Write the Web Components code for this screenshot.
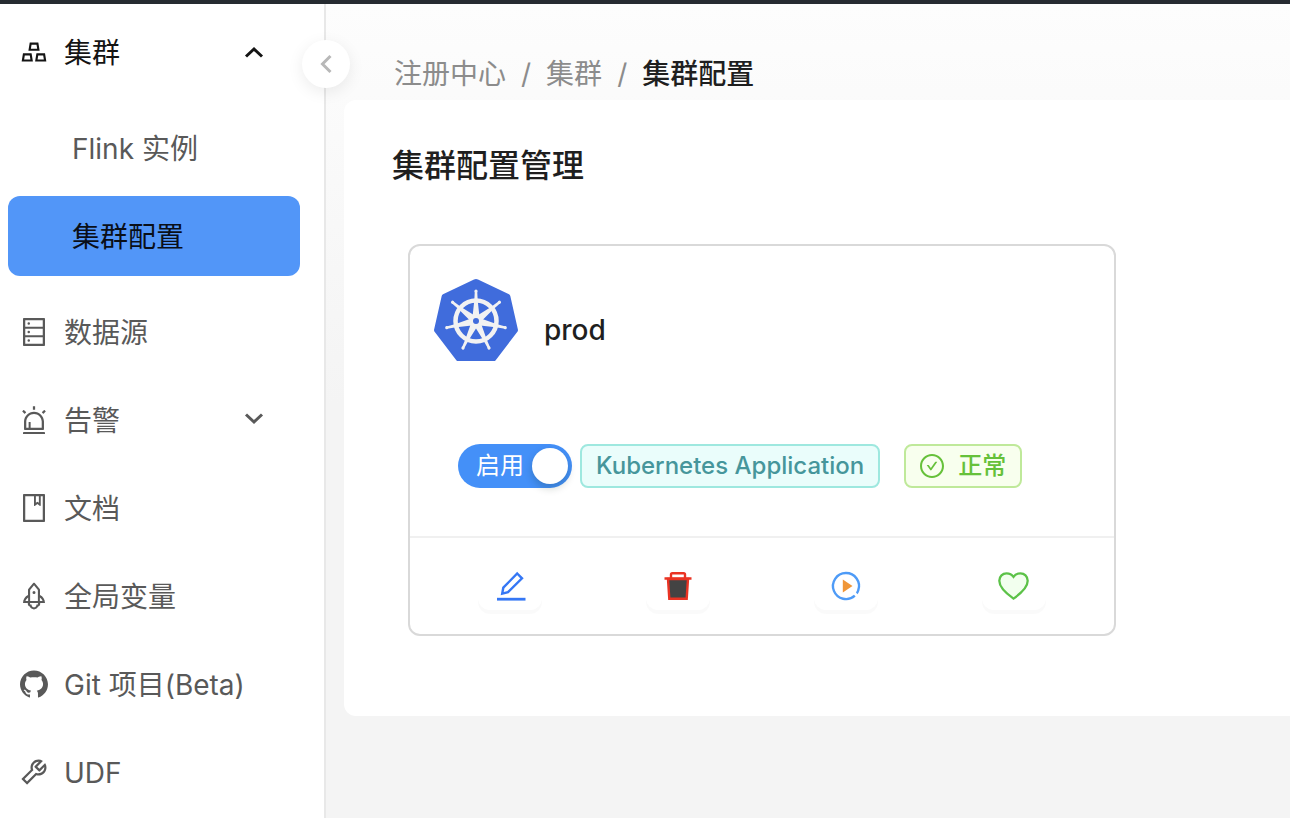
<!DOCTYPE html>
<html lang="zh-CN">
<head>
<meta charset="utf-8">
<meta name="viewport" content="width=device-width, initial-scale=1">
<title>集群配置</title>
<style>
  html, body { margin: 0; height: 100%; }
  body { font-family: Inter, "Noto Sans CJK SC", sans-serif; font-size: 28px; line-height: 44px; color: #1f1f1f; }
</style>
</head>
<body>
<app-shell>
  <side-menu slot="side">
    <menu-item icon="gold" arrow="up" current>集群</menu-item>
    <sub-menu>
      <menu-item nested>Flink 实例</menu-item>
      <menu-item nested selected>集群配置</menu-item>
    </sub-menu>
    <menu-item icon="database">数据源</menu-item>
    <menu-item icon="alert" arrow="down">告警</menu-item>
    <menu-item icon="book">文档</menu-item>
    <menu-item icon="rocket">全局变量</menu-item>
    <menu-item icon="github">Git 项目(Beta)</menu-item>
    <menu-item icon="tool">UDF</menu-item>
  </side-menu>
  <bread-crumbs>
    <a href="#registration">注册中心</a>
    <a href="#cluster">集群</a>
    <span aria-current="page">集群配置</span>
  </bread-crumbs>
  <page-panel heading="集群配置管理">
    <cluster-card name="prod">
      <toggle-switch slot="tags">启用</toggle-switch>
      <status-tag slot="tags" kind="cyan">Kubernetes Application</status-tag>
      <status-tag slot="tags" kind="green" icon="check">正常</status-tag>
      <icon-button slot="actions" icon="edit" label="编辑"></icon-button>
      <icon-button slot="actions" icon="trash" label="删除"></icon-button>
      <icon-button slot="actions" icon="play" label="启动"></icon-button>
      <icon-button slot="actions" icon="heart" label="心跳"></icon-button>
    </cluster-card>
  </page-panel>
</app-shell>

<script>
const ant = d => `<svg viewBox="64 64 896 896" fill="currentColor"><path d="${d}"/></svg>`;
const ICONS = {
  gold: ant('M342 472h342c.4 0 .9 0 1.3-.1 4.4-.7 7.3-4.8 6.6-9.2l-40.2-248c-.6-3.9-4-6.7-7.9-6.7H382.2c-3.9 0-7.3 2.8-7.9 6.7l-40.2 248c-.1.4-.1.9-.1 1.3 0 4.4 3.6 8 8 8zm91.2-196h159.5l20.7 128h-201l20.8-128zm2.5 282.7c-.6-3.9-4-6.7-7.9-6.7H166.2c-3.9 0-7.3 2.8-7.9 6.7l-40.2 248c-.1.4-.1.9-.1 1.3 0 4.4 3.6 8 8 8h342c.4 0 .9 0 1.3-.1 4.4-.7 7.3-4.8 6.6-9.2l-40.2-248zM196.5 748l20.7-128h159.5l20.7 128H196.5zm709.4 58.7l-40.2-248c-.6-3.9-4-6.7-7.9-6.7H596.2c-3.9 0-7.3 2.8-7.9 6.7l-40.2 248c-.1.4-.1.9-.1 1.3 0 4.4 3.6 8 8 8h342c.4 0 .9 0 1.3-.1 4.3-.7 7.3-4.8 6.6-9.2zM626.5 748l20.7-128h159.5l20.7 128H626.5z'),
  database: ant('M832 64H192c-17.7 0-32 14.3-32 32v832c0 17.7 14.3 32 32 32h640c17.7 0 32-14.3 32-32V96c0-17.7-14.3-32-32-32zm-600 72h560v208H232V136zm560 480H232V408h560v208zm0 272H232V680h560v208zM304 240a40 40 0 1080 0 40 40 0 10-80 0zm0 272a40 40 0 1080 0 40 40 0 10-80 0zm0 272a40 40 0 1080 0 40 40 0 10-80 0z'),
  alert: ant('M193 796c0 17.7 14.3 32 32 32h574c17.7 0 32-14.3 32-32V563c0-176.2-142.8-319-319-319S193 386.8 193 563v233zm72-233c0-136.4 110.6-247 247-247s247 110.6 247 247v193H404V585c0-5.5-4.5-10-10-10h-44c-5.5 0-10 4.5-10 10v171h-75V563zm-48.1-252.5l39.6-39.6c3.1-3.1 3.1-8.2 0-11.3l-67.9-67.9a8.03 8.03 0 00-11.3 0l-39.6 39.6a8.03 8.03 0 000 11.3l67.9 67.9c3.1 3.1 8.1 3.1 11.3 0zm669.6-79.2l-39.6-39.6a8.03 8.03 0 00-11.3 0l-67.9 67.9a8.03 8.03 0 000 11.3l39.6 39.6c3.1 3.1 8.2 3.1 11.3 0l67.9-67.9c3.1-3.2 3.1-8.2 0-11.3zM832 892H192c-17.7 0-32 14.3-32 32v24c0 4.4 3.6 8 8 8h688c4.4 0 8-3.6 8-8v-24c0-17.7-14.3-32-32-32zM484 180h56c4.4 0 8-3.6 8-8V76c0-4.4-3.6-8-8-8h-56c-4.4 0-8 3.6-8 8v96c0 4.4 3.6 8 8 8z'),
  book: ant('M832 64H192c-17.7 0-32 14.3-32 32v832c0 17.7 14.3 32 32 32h640c17.7 0 32-14.3 32-32V96c0-17.7-14.3-32-32-32zm-260 72h96v209.9L621.5 312 572 347.4V136zm220 752H232V136h280v296.9c0 3.3 1 6.6 3 9.3a15.9 15.9 0 0022.3 3.7l83.8-59.9 81.4 59.4c2.7 2 6 3.1 9.4 3.1 8.8 0 16-7.2 16-16V136h64v752z'),
  rocket: ant('M864 736c0-111.6-65.4-208-160-252.9V317.3c0-15.1-5.3-29.7-15.1-41.2L536.5 95.4C530.1 87.8 521 84 512 84s-18.1 3.8-24.5 11.4L335.1 276.1a63.97 63.97 0 00-15.1 41.2v165.8C225.4 528 160 624.4 160 736h156.5c-2.3 7.2-3.5 15-3.5 23.8 0 22.1 7.6 43.7 21.4 60.8a97.2 97.2 0 0043.1 30.6c23.1 54 75.6 88.8 134.5 88.8 29.1 0 57.3-8.6 81.4-24.8 23.6-15.8 41.9-37.9 53-64a97 97 0 0043.1-30.5 97.52 97.52 0 0021.4-60.8c0-8.4-1.1-16.4-3.1-23.8H864zM762.3 621.4c9.4 14.6 17 30.3 22.5 46.6H700V558.7a211.6 211.6 0 0162.3 62.7zM388 483.1V318.8l124-147 124 147V668H388V483.1zM239.1 668c5.5-16.3 13.1-32 22.5-46.6 16.3-25.2 37.5-46.5 62.3-62.7V668h-84.8zm388.9 116.2c-5.2 3-11.2 4.2-17.1 3.4l-19.5-2.4-2.8 19.4c-5.4 37.9-38.4 66.5-76.7 66.5-38.3 0-71.3-28.6-76.7-66.5l-2.8-19.5-19.5 2.5a27.7 27.7 0 01-17.1-3.5c-8.7-5-14.1-14.3-14.1-24.4 0-10.6 5.9-19.4 14.6-23.8h231.3c8.8 4.5 14.6 13.3 14.6 23.8-.1 10.2-5.5 19.6-14.2 24.5zM464 400a48 48 0 1096 0 48 48 0 10-96 0z'),
  github: ant('M511.6 76.3C264.3 76.2 64 276.4 64 523.5 64 718.9 189.3 885 363.8 946c23.5 5.9 19.9-10.8 19.9-22.2v-77.5c-135.7 15.9-141.2-73.9-150.3-88.9C215 726 171.5 718 184.5 703c30.9-15.9 62.4 4 98.9 57.9 26.4 39.1 77.9 32.5 104 26 5.7-23.5 17.9-44.5 34.7-60.8-140.6-25.2-199.2-111-199.2-213 0-49.5 16.3-95 48.3-131.7-20.4-60.5 1.9-112.3 4.9-120 58.1-5.2 118.5 41.6 123.2 45.3 33-8.9 70.7-13.6 112.9-13.6 42.4 0 80.2 4.9 113.5 13.9 11.3-8.6 67.3-48.8 121.3-43.9 2.9 7.7 24.7 58.3 5.5 118 32.4 36.8 48.9 82.7 48.9 132.3 0 102.2-59 188.1-200 212.9a127.5 127.5 0 0138.1 91v112.5c.8 9 0 17.9 15 17.9 177.1-59.7 304.6-227 304.6-424.1 0-247.2-200.4-447.3-447.5-447.3z'),
  tool: ant('M876.6 239.5c-.5-.9-1.2-1.8-2-2.5-5-5-13.1-5-18.1 0L684.2 409.3l-67.9-67.9L788.7 169c.8-.8 1.4-1.6 2-2.5 3.6-6.1 1.6-13.9-4.5-17.5-98.2-58-226.8-44.7-311.3 39.7-67 67-89.2 162-66.5 247.4l-293 293c-3 3-2.8 7.9.3 11l169.7 169.7c3.1 3.1 8.1 3.3 11 .3l292.9-292.9c85.5 22.8 180.5.7 247.6-66.4 84.4-84.5 97.7-213.1 39.7-311.3zM786 499.8c-58.1 58.1-145.3 69.3-214.6 33.6l-8.8 8.8-.1-.1-274 274.1-79.2-79.2 230.1-230.1s0 .1.1.1l52.8-52.8c-35.7-69.3-24.5-156.5 33.6-214.6a184.2 184.2 0 01144-53.5L537 318.9a32.05 32.05 0 000 45.3l124.5 124.5a32.05 32.05 0 0045.3 0l132.8-132.8c3.7 51.8-14.4 104.8-53.6 143.9z'),
  check: ant('M699 353h-46.9c-10.2 0-19.9 4.9-25.9 13.3L469 584.3l-71.2-98.8c-6-8.3-15.6-13.3-25.9-13.3H325c-6.5 0-10.3 7.4-6.5 12.7l124.6 172.8a31.8 31.8 0 0051.7 0l210.6-292c3.9-5.3.1-12.7-6.4-12.7zM512 64C264.6 64 64 264.6 64 512s200.6 448 448 448 448-200.6 448-448S759.4 64 512 64zm0 820c-205.4 0-372-166.6-372-372s166.6-372 372-372 372 166.6 372 372-166.6 372-372 372z'),
  up: '<svg viewBox="0 0 20 20" fill="none" stroke="currentColor" stroke-width="3"><path d="M2 14.500 10 7l8 7.500"/></svg>',
  down: '<svg viewBox="0 0 20 20" fill="none" stroke="currentColor" stroke-width="3"><path d="M2 4.500 10 12l8-7.500"/></svg>',
  left: '<svg viewBox="0 0 20 20" fill="none" stroke="currentColor" stroke-width="3"><path d="M14.500 2 6.500 10l8 8"/></svg>',
  edit: '<svg viewBox="0 0 32 32" fill="none" stroke="#3577f5"><path stroke-width="2.400" d="M23.200 3.500 28 8.300 14 22.200l-5.800 1.500 1.100-6z"/><path stroke-width="2.800" d="M3 29.200h28.500"/></svg>',
  trash: '<svg viewBox="0 0 32 32" fill="none"><path fill="#434343" stroke="#ea3323" stroke-width="2.400" d="M6 9h20l-1.300 19.700H7.300z"/><path stroke="#ea3323" stroke-width="2.400" stroke-linejoin="round" d="M2.500 8.500h27M9 8V4.500a1.300 1.300 0 0 1 1.300-1.300h11.400a1.300 1.300 0 0 1 1.300 1.300V8"/></svg>',
  play: '<svg viewBox="0 0 32 32"><path fill="none" stroke="#4e9bf7" stroke-width="2.400" d="M24.800 25.600A13 13 0 1 1 28.200 20.500Q27.600 22.500 26.600 23.300"/><path fill="#f09637" d="M12.800 9.400v13.200L22.500 16z"/></svg>',
  heart: '<svg viewBox="0 0 32 32"><path fill="#f2ffee" stroke="#5cc248" stroke-width="2.300" d="M15.500 28.600C7.500 23 1.300 17.600 1.300 10.800 1.300 6.200 4.700 3.300 8.500 3.300c3 0 5.500 1.300 7 3.500 1.500-2.200 4-3.500 7-3.500 3.800 0 7.200 2.900 7.200 7.500C29.700 17.600 23.500 23 15.500 28.600z"/></svg>'
};

class Base extends HTMLElement {
  connectedCallback() {
    if (this.shadowRoot) return;
    this.attachShadow({ mode: 'open' }).innerHTML = this.render();
  }
}

customElements.define('ui-icon', class extends Base {
  render() {
    return `<style>:host{display:block;flex:none;width:28px;height:28px}svg{display:block;width:100%;height:100%}</style>${ICONS[this.getAttribute('name')] || ''}`;
  }
});

customElements.define('app-shell', class extends Base {
  render() {
    return `<style>
      :host{display:flex;flex-direction:column;min-height:100%}
      .top{height:4px;background:#262b31}
      .body{display:flex;flex:1}
      aside{position:relative;box-sizing:border-box;flex:none;width:326px;background:#fff;border-right:2px solid #e8e8e8}
      main{flex:1;min-width:0;padding-left:18px;background:linear-gradient(#fdfdfd,#f4f4f4 400px)}
      .fold{position:absolute;top:36px;right:-26px;z-index:1;display:grid;place-items:center;width:48px;height:48px;padding:0;border:0;border-radius:50%;background:#fff;color:#b8b8b8;box-shadow:0 4px 16px rgba(0,0,0,.08)}
      .fold ui-icon{width:20px;height:20px}
    </style>
    <div class="top"></div>
    <div class="body">
      <aside><slot name="side"></slot><button class="fold" aria-label="收起菜单"><ui-icon name="left"></ui-icon></button></aside>
      <main><slot></slot></main>
    </div>`;
  }
});

customElements.define('side-menu', class extends Base {
  render() {
    return `<style>:host{display:block}nav{display:flex;flex-direction:column;gap:8px;padding:8px 24px 0 8px}</style><nav><slot></slot></nav>`;
  }
});

customElements.define('sub-menu', class extends Base {
  render() {
    return `<style>:host{display:flex;flex-direction:column;gap:8px;padding:8px 0}</style><slot></slot>`;
  }
});

customElements.define('menu-item', class extends Base {
  render() {
    const icon = this.getAttribute('icon'), arrow = this.getAttribute('arrow');
    return `<style>
      :host{display:block;color:#595959}
      :host([current]){color:#141414}
      :host([selected]){color:#0a0f18}
      a{display:flex;align-items:center;gap:16px;height:80px;padding:0 36px 0 12px;border-radius:12px;color:inherit;text-decoration:none}
      :host([nested]) a{padding-left:64px}
      :host([selected]) a{background:#5296f8}
      span{flex:1;padding-top:2px;white-space:nowrap}
      .arrow{width:20px;height:20px}
    </style>
    <a href="#menu">${icon ? `<ui-icon name="${icon}"></ui-icon>` : ''}<span><slot></slot></span>${arrow ? `<ui-icon class="arrow" name="${arrow}"></ui-icon>` : ''}</a>`;
  }
});

customElements.define('bread-crumbs', class extends Base {
  render() {
    return `<style>
      :host{display:block;padding:48px 50px 4px}
      nav{display:flex;color:#8c8c8c}
      ::slotted(*){color:#8c8c8c;text-decoration:none}
      ::slotted(:not(:last-child))::after{content:"/";margin:0 15px}
      ::slotted([aria-current]){color:#1f1f1f;font-weight:500}
    </style><nav aria-label="路径"><slot></slot></nav>`;
  }
});

customElements.define('page-panel', class extends Base {
  render() {
    return `<style>
      :host{display:block;padding:42px 48px 80px;background:#fff;border-radius:12px 0 0 12px}
      h1{margin:0 0 54px;font-size:32px;line-height:48px;font-weight:500}
      .list{padding:0 16px}
    </style><h1>${this.getAttribute('heading')}</h1><div class="list"><slot></slot></div>`;
  }
});

customElements.define('cluster-card', class extends Base {
  render() {
    const spokes = [0, 1, 2, 3, 4, 5, 6].map(i =>
      `<g transform="rotate(${i * 360 / 7} 42 43)"><path d="M40.800 13h2.400l.5 9.500L45.400 38h-6.800l1.700-15.500z"/><circle cx="42" cy="13" r="1.600"/></g>`).join('');
    return `<style>
      :host{display:block;box-sizing:border-box;max-width:708px;border:2px solid #d9d9d9;border-radius:12px;background:#fff}
      .body{padding:32px 24px 48px}
      .head{display:flex;align-items:center;gap:26px}
      svg{flex:none;width:84px;height:84px}
      h2{margin:0;padding-top:20px;font-size:28px;line-height:44px;font-weight:500}
      .tags{display:flex;align-items:center;padding:82px 0 0 24px}
      .actions{display:grid;grid-template-columns:repeat(4,1fr);justify-items:center;padding:24px 16px;border-top:2px solid #f0f0f0}
    </style>
    <div class="body">
      <div class="head">
        <svg viewBox="0 0 84 84" aria-hidden="true">
          <path fill="#406cdc" d="M40 1.500Q42 .600 44 1.500L75 16.300Q76 16.800 76.300 18L83.900 51.500Q84.200 53 83.200 54L61.500 82.400Q60.900 83 60 83H24Q23.100 83 22.500 82.400L.8 54Q-.2 53 .1 51.500L7.700 18Q8 16.800 9 16.300z"/>
          <g fill="#f2f2f2">${spokes}<circle cx="42" cy="43" r="7"/></g>
          <circle cx="42" cy="43" r="20.500" fill="none" stroke="#f2f2f2" stroke-width="4.500"/>
          <circle cx="42" cy="43" r="3" fill="#406cdc"/>
        </svg>
        <h2>${this.getAttribute('name')}</h2>
      </div>
      <div class="tags"><slot name="tags"></slot></div>
    </div>
    <div class="actions"><slot name="actions"></slot></div>`;
  }
});

customElements.define('toggle-switch', class extends Base {
  render() {
    return `<style>
      :host{display:block;margin-right:8px}
      label{display:grid;align-items:center;width:114px;height:44px;font-size:24px;line-height:44px;color:#fff}
      input,span{grid-area:1/1}
      input{appearance:none;display:flex;align-items:center;width:100%;height:100%;margin:0;padding:0 4px;box-sizing:border-box;border-radius:22px;background:#4490f8}
      input::before{content:"";width:36px;height:36px;border-radius:50%;background:#fff;box-shadow:0 4px 8px rgba(0,35,11,.2)}
      input:checked{justify-content:flex-end}
      span{z-index:1;padding-left:18px;pointer-events:none}
    </style><label><input type="checkbox" role="switch" checked><span><slot></slot></span></label>`;
  }
});

customElements.define('status-tag', class extends Base {
  render() {
    const icon = this.getAttribute('icon');
    return `<style>
      :host{display:flex;align-items:center;gap:14px;box-sizing:border-box;height:44px;margin-right:24px;padding:0 14px;border:2px solid;border-radius:8px;font-size:24px;line-height:40px;font-weight:500;white-space:nowrap}
      :host([kind=cyan]){color:#46969b;background:#eafdfb;border-color:#9ee8df}
      :host([kind=green]){color:#66c13a;background:#f8ffee;border-color:#bfe99a}
      ui-icon{width:24px;height:24px}
    </style>${icon ? `<ui-icon name="${icon}"></ui-icon>` : ''}<span><slot></slot></span>`;
  }
});

customElements.define('icon-button', class extends Base {
  render() {
    return `<style>
      :host{display:block}
      button{display:grid;place-items:center;width:64px;height:48px;padding:0;border:0;border-radius:12px;background:#fff;box-shadow:0 4px 0 rgba(0,0,0,.02)}
      ui-icon{width:32px;height:32px}
    </style><button aria-label="${this.getAttribute('label')}"><ui-icon name="${this.getAttribute('icon')}"></ui-icon></button>`;
  }
});
</script>
</body>
</html>
